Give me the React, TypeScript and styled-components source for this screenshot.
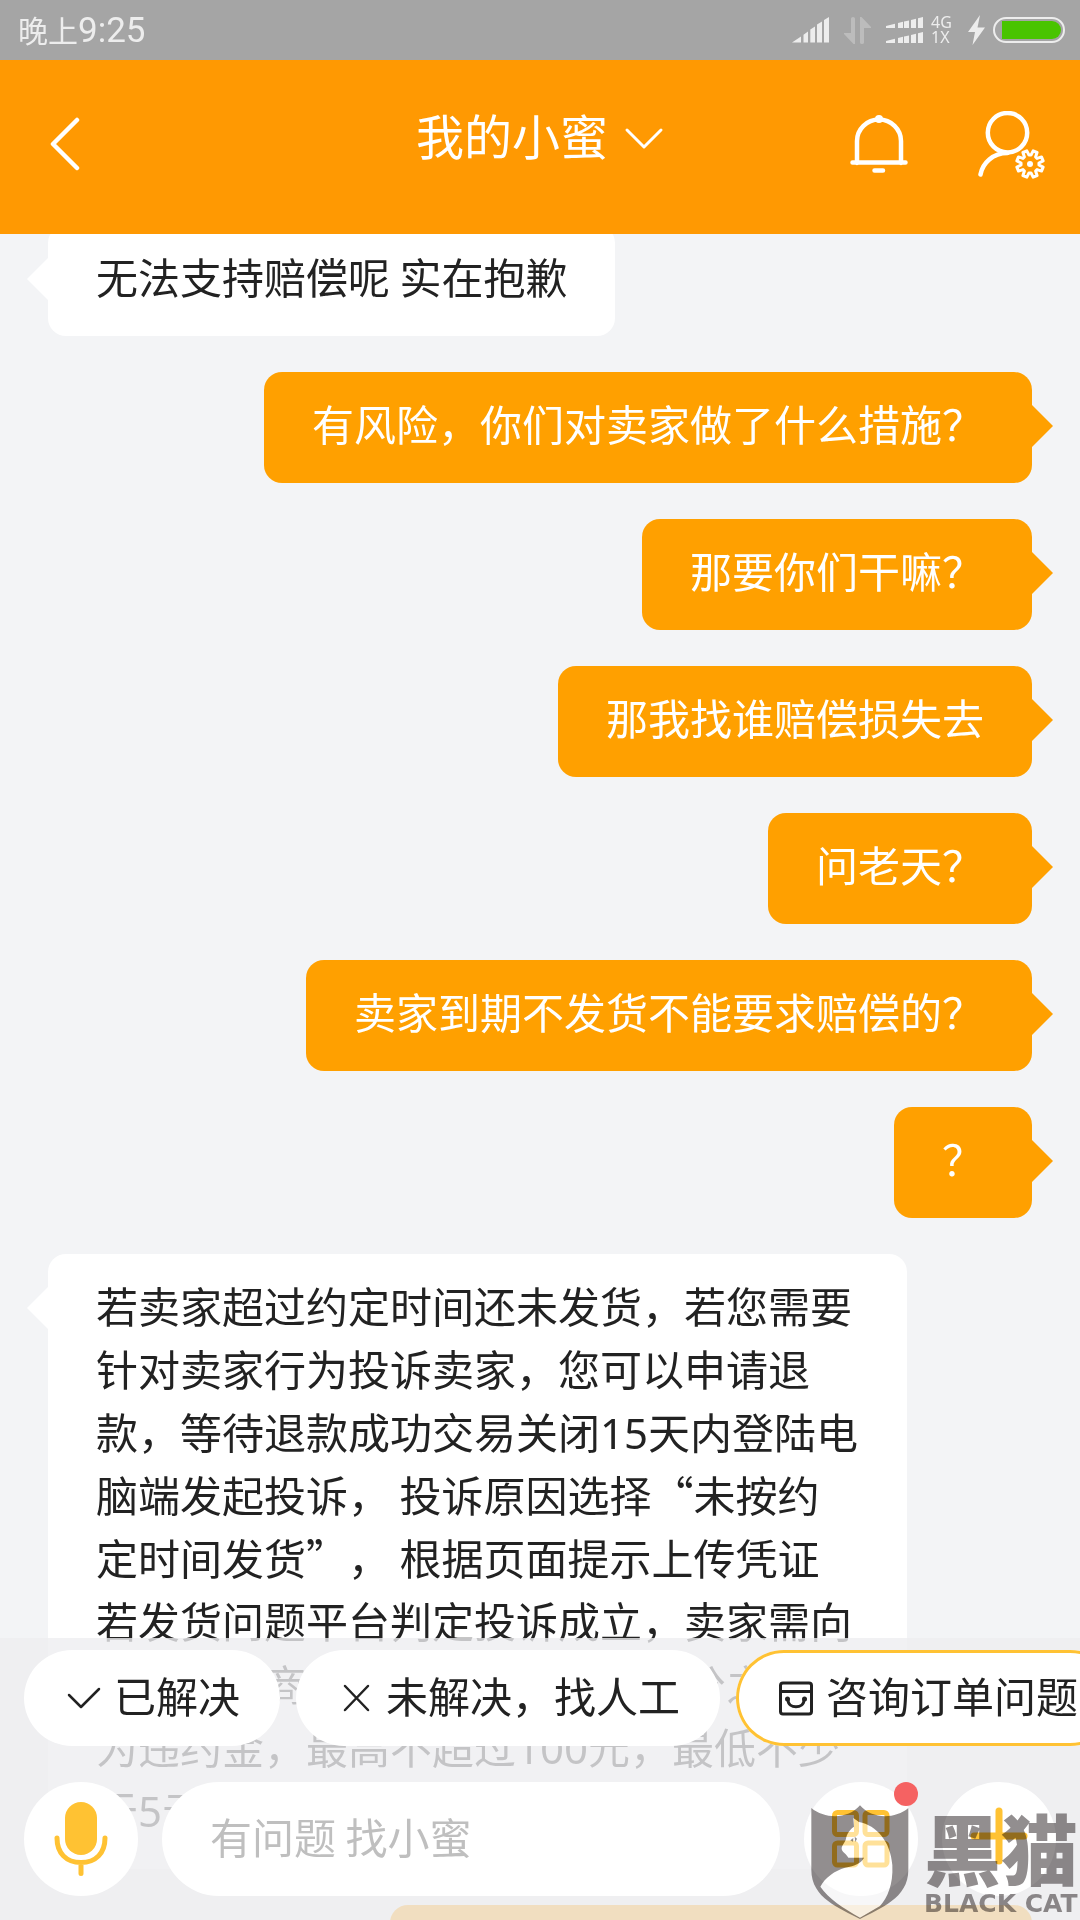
import React from "react";
import styled, { createGlobalStyle, css } from "styled-components";

const GlobalStyle = createGlobalStyle`
  *, *::before, *::after { box-sizing: border-box; }
  html, body { margin: 0; padding: 0; }
  body {
    background: #f3f4f6;
    color: #222;
    font-family: "Noto Sans CJK SC", "Noto Sans", sans-serif;
    font-size: 42px;
    line-height: 63px;
    text-spacing-trim: space-all;
  }
  button, input { font: inherit; color: inherit; margin: 0; }
  button { border: 0; padding: 0; background: none; cursor: pointer; }
  svg { display: block; flex: none; }
`;

const Screen = styled.div`
  position: relative;
  display: flex;
  flex-direction: column;
  height: 100vh;
  overflow: hidden;
`;

const StatusBar = styled.div`
  display: flex;
  align-items: center;
  flex: none;
  height: 60px;
  padding: 0 15px 0 18px;
  background: #a5a5a5;
  color: #ededed;
  font-size: 30px;
  line-height: 58px;
`;

const Clock = styled.time`
  margin-right: auto;
`;

const ClockDigits = styled.span`
  font-family: Roboto, sans-serif;
  font-size: 35px;
`;

const StatusIcons = styled.div`
  display: flex;
  align-items: center;
  gap: 15px;
`;

const StatusGroup = styled.div`
  display: flex;
  align-items: center;
  gap: 8px;
`;

const NetworkLabel = styled.span`
  width: 22px;
  font-family: "Noto Sans", sans-serif;
  font-size: 16px;
  line-height: 15px;
`;

const Header = styled.header`
  display: grid;
  grid-template-columns: 1fr auto 1fr;
  align-items: center;
  flex: none;
  height: 174px;
  padding: 0 34px;
  background: #ff9902;
  color: #fff;
`;

const HeaderButton = styled.button`
  display: flex;
`;

const BackButton = styled(HeaderButton)`
  padding-left: 14px;
`;

const HeaderActions = styled.div`
  display: flex;
  align-items: center;
  justify-content: flex-end;
  gap: 70px;
`;

const TitleButton = styled.button`
  display: flex;
  align-items: center;
  gap: 16px;
  padding-bottom: 16px;
`;

const Title = styled.span`
  padding-bottom: 10px;
  font-size: 48px;
  line-height: 72px;
`;

const Chat = styled.main`
  display: flex;
  flex-direction: column;
  gap: 36px;
  flex: 1;
  min-height: 0;
  padding: 0 48px;
  overflow: hidden;
`;

const Bubble = styled.p<{ $mine?: boolean; $first?: boolean }>`
  position: relative;
  flex: none;
  max-width: 859px;
  min-height: 111px;
  margin: ${(p) => (p.$first ? "-9px 0 0" : "0")};
  padding: 19px 48px 29px;
  border-radius: 18px;
  align-self: ${(p) => (p.$mine ? "flex-end" : "flex-start")};
  background: ${(p) => (p.$mine ? "#ffa000" : "#fff")};
  color: ${(p) => (p.$mine ? "#fff" : "#222")};
  white-space: pre-wrap;

  &::before {
    content: "";
    position: absolute;
    top: 33px;
    width: 21px;
    height: 42px;
    background: inherit;
    ${(p) =>
      p.$mine
        ? css`
            left: 100%;
            clip-path: polygon(0 0, 100% 50%, 0 100%);
          `
        : css`
            right: 100%;
            clip-path: polygon(100% 0, 0 50%, 100% 100%);
          `}
  }
`;

const Digits = styled.span`
  font-family: "Noto Sans", sans-serif;
  line-height: 1;
`;

const Composer = styled.footer`
  position: absolute;
  left: 0;
  right: 0;
  bottom: 0;
  display: flex;
  flex-direction: column;
  gap: 36px;
  padding: 12px 24px 24px;
  background: rgba(237, 238, 240, 0.8);
  overflow: hidden;
`;

const QuickReplies = styled.div`
  display: flex;
  gap: 16px;
`;

const QuickReply = styled.button<{ $outlined?: boolean }>`
  display: flex;
  align-items: center;
  flex: none;
  gap: 6px;
  height: 96px;
  padding: 0 40px 0 36px;
  border-radius: 48px;
  background: #fff;
  box-shadow: ${(p) => (p.$outlined ? "inset 0 0 0 3px #ffc233" : "none")};
  white-space: nowrap;
`;

const ReplyText = styled.span`
  padding-bottom: 8px;
`;

const InputRow = styled.form`
  display: flex;
  gap: 24px;
`;

const RoundButton = styled.button`
  position: relative;
  display: flex;
  align-items: center;
  justify-content: center;
  flex: none;
  width: 114px;
  height: 114px;
  border-radius: 50%;
  background: #fff;
`;

const Dot = styled.span`
  position: absolute;
  top: 0;
  right: 0;
  width: 24px;
  height: 24px;
  border-radius: 50%;
  background: #f56262;
`;

const Question = styled.input`
  flex: 1;
  min-width: 0;
  height: 114px;
  padding: 0 48px 8px;
  border: 0;
  border-radius: 57px;
  outline: 0;
  background: #fff;

  &::placeholder {
    color: #bfbfbf;
    opacity: 1;
  }
`;

const Watermark = styled.div`
  position: absolute;
  right: 0;
  bottom: 0;
  display: flex;
  gap: 14px;
  pointer-events: none;
`;

const Emblem = styled.div`
  display: grid;

  & > svg {
    grid-area: 1 / 1;
  }
`;

const ShieldShape = styled.svg`
  mix-blend-mode: multiply;
`;

const Brand = styled.div`
  display: flex;
  flex-direction: column;
  width: 156px;
  color: #928e8f;
  mix-blend-mode: multiply;
`;

const BrandName = styled.span`
  font-size: 77px;
  font-weight: 900;
  line-height: 86px;
`;

const BrandLatin = styled.span`
  font-family: "DejaVu Sans", sans-serif;
  font-size: 25px;
  font-weight: 700;
  line-height: 28px;
  white-space: nowrap;
`;

const BAR_XS = [0, 12, 18, 25, 32];

const SignalBars = () => (
  <svg width="37" height="26" viewBox="0 0 37 26" fill="#ededed" aria-hidden="true">
    <path d="M0 25.500L9 19.500V25.500ZM11.500 17.800L16 14.500V25.500H11.500ZM18.300 12.500L23 9.500V25.500H18.300ZM25 7.500L30 4.500V25.500H25ZM32 3L37 0V25.500H32Z" />
  </svg>
);

const DualSignal = () => (
  <svg width="37" height="28" viewBox="0 0 37 28" fill="#ededed" aria-hidden="true">
    {[0, 15].map((top) => (
      <g key={top} transform={`translate(0 ${top})`}>
        {BAR_XS.map((x, i) => {
          const end = i === 0 ? 9 : x + 5;
          const from = 10 - (x * 9) / 37;
          const to = 10 - (end * 9) / 37;
          return <path key={x} d={`M${x} ${from}L${end} ${to}V12H${x}Z`} />;
        })}
      </g>
    ))}
  </svg>
);

const DataArrows = () => (
  <svg width="27" height="27" viewBox="0 0 27 27" fill="#bcbcbc" aria-hidden="true">
    <path d="M7 1.500Q7 0 9 0T11 1.500V27H9.500L0 17V16H7ZM16 0H17.500L27 10V11H20V25.500Q20 27 18 27T16 25.500Z" />
  </svg>
);

const Bolt = () => (
  <svg width="17" height="30" viewBox="0 0 17 30" fill="#ededed" aria-hidden="true">
    <path d="M12 0L0 17H7L4.500 30L17 12.500H9.500Z" />
  </svg>
);

const Battery = () => (
  <svg width="72" height="26" viewBox="0 0 72 26" aria-hidden="true">
    <rect x="1" y="1" width="70" height="24" rx="12" fill="none" stroke="#ededed" strokeWidth="2" />
    <path d="M9 4H59A9 9 0 0 1 59 22H9Z" fill="#49c400" />
  </svg>
);

const line = {
  fill: "none",
  stroke: "currentColor",
  strokeLinecap: "round" as const,
  strokeLinejoin: "round" as const,
};

const BackIcon = () => (
  <svg width="32" height="60" viewBox="0 0 32 60" {...line} strokeWidth="4.500" aria-hidden="true">
    <path d="M29 3L5 27L29 51" />
  </svg>
);

const ChevronIcon = () => (
  <svg width="40" height="24" viewBox="0 0 40 24" {...line} strokeWidth="3" aria-hidden="true">
    <path d="M3 3L20 20L37 3" />
  </svg>
);

const BellIcon = () => (
  <svg width="58" height="64" viewBox="0 0 58 64" {...line} strokeWidth="4.500" aria-hidden="true">
    <path d="M7 48V26A22 21.500 0 0 1 51 26V48M2.500 47.500H55.500M24.500 55.500H33" />
    <circle cx="29" cy="4" r="4" fill="currentColor" stroke="none" />
  </svg>
);

const GEAR_POINTS = Array.from({ length: 8 }, (_, i) => {
  const tooth = ((i * 45 + 22.5) * Math.PI) / 180;
  return [
    [-16, 9],
    [-9, 13.5],
    [9, 13.5],
    [16, 9],
  ]
    .map(([offset, radius]) => {
      const angle = tooth + (offset * Math.PI) / 180;
      return `${52 + radius * Math.cos(angle)},${53 + radius * Math.sin(angle)}`;
    })
    .join(" ");
}).join(" ");

const PersonIcon = () => (
  <svg width="68" height="72" viewBox="0 0 68 72" {...line} strokeWidth="4.500" aria-hidden="true">
    <circle cx="29.500" cy="21.700" r="19.700" />
    <path d="M29.500 42C15 42 4.500 52 2.500 63.500" />
    <polygon points={GEAR_POINTS} strokeWidth="3" />
    <circle cx="52" cy="53" r="3" fill="currentColor" stroke="none" />
  </svg>
);

const CheckIcon = () => (
  <svg width="48" height="48" viewBox="0 0 48 48" {...line} strokeWidth="2.500" aria-hidden="true">
    <path d="M9 21L21 33L39 15" />
  </svg>
);

const CrossIcon = () => (
  <svg width="48" height="48" viewBox="0 0 48 48" {...line} strokeWidth="2.500" aria-hidden="true">
    <path d="M13 12L36 36M36 12L13 36" />
  </svg>
);

const OrderIcon = () => (
  <svg width="48" height="48" viewBox="0 0 48 48" {...line} strokeWidth="3" aria-hidden="true">
    <rect x="8.500" y="9" width="31" height="31" rx="2.500" />
    <path d="M9 17.500H39M16 26C16 35 32 35 32 26" />
    <circle cx="15.500" cy="25" r="2.500" fill="currentColor" stroke="none" />
    <circle cx="32.500" cy="25" r="2.500" fill="currentColor" stroke="none" />
  </svg>
);

const MicIcon = () => (
  <svg width="54" height="76" viewBox="0 0 54 76" fill="#ffc233" aria-hidden="true">
    <rect x="11" y="1" width="32" height="53" rx="16" />
    <path
      d="M3 37C3 52 12 61.500 27 61.500S51 52 51 37M27 62V72.500"
      fill="none"
      stroke="#ffc233"
      strokeWidth="5"
      strokeLinecap="round"
    />
  </svg>
);

const GridIcon = () => (
  <svg width="58" height="58" viewBox="0 0 58 58" fill="none" stroke="#ffc233" strokeWidth="5" aria-hidden="true">
    <rect x="2.500" y="2.500" width="22" height="22" rx="3" />
    <rect x="33" y="2.500" width="22" height="22" rx="3" />
    <rect x="2.500" y="33" width="22" height="22" rx="3" />
    <rect x="33" y="33" width="22" height="22" rx="3" />
  </svg>
);

const PlusIcon = () => (
  <svg width="58" height="64" viewBox="0 0 58 64" fill="none" stroke="#ffc233" strokeWidth="7" strokeLinecap="round" aria-hidden="true">
    <path d="M4 29H54M29 4V54" />
  </svg>
);

const CAT =
  "M190 144L207 156C260 166 302 215 307 285C310 345 292 383 270 408L210 443C160 415 115 385 91 350C105 322 135 302 165 293C195 288 215 278 222 263H175C170 252 155 245 155 236C155 226 166 216 168 206C170 192 180 178 192 170Z";

const CatEmblem = () => (
  <Emblem>
    <ShieldShape width="100" height="116" viewBox="60 102 300 348" aria-hidden="true">
      <path
        fill="#928e8f"
        fillRule="evenodd"
        d={`M64 114C105 148 175 148 210 106C245 148 315 148 355 114V300C355 385 270 415 210 447C150 415 64 385 64 300Z${CAT}`}
      />
      <path d="M181 211L190 204L189 215ZM194 200L201 206L196 216Z" fill="#928e8f" />
    </ShieldShape>
    <svg width="100" height="116" viewBox="60 102 300 348" aria-hidden="true">
      <path fill="#fff" fillOpacity="0.5" d={CAT} />
    </svg>
  </Emblem>
);

const QUESTIONS = [
  "有风险，你们对卖家做了什么措施？",
  "那要你们干嘛？",
  "那我找谁赔偿损失去",
  "问老天？",
  "卖家到期不发货不能要求赔偿的？",
  "？",
];

export default function App() {
  return (
    <Screen>
      <GlobalStyle />
      <StatusBar>
        <Clock>
          晚上<ClockDigits>9:25</ClockDigits>
        </Clock>
        <StatusIcons>
          <SignalBars />
          <DataArrows />
          <StatusGroup>
            <DualSignal />
            <NetworkLabel>
              4G
              <br />
              1X
            </NetworkLabel>
          </StatusGroup>
          <StatusGroup>
            <Bolt />
            <Battery />
          </StatusGroup>
        </StatusIcons>
      </StatusBar>

      <Header>
        <BackButton type="button" aria-label="返回">
          <BackIcon />
        </BackButton>
        <TitleButton type="button">
          <Title>我的小蜜</Title>
          <ChevronIcon />
        </TitleButton>
        <HeaderActions>
          <HeaderButton type="button" aria-label="通知">
            <BellIcon />
          </HeaderButton>
          <HeaderButton type="button" aria-label="账户设置">
            <PersonIcon />
          </HeaderButton>
        </HeaderActions>
      </Header>

      <Chat>
        <Bubble $first>无法支持赔偿呢 实在抱歉</Bubble>
        {QUESTIONS.map((text) => (
          <Bubble key={text} $mine>
            {text}
          </Bubble>
        ))}
        <Bubble>
          若卖家超过约定时间还未发货，若您需要针对卖家行为投诉卖家，您可以申请退款，等待退款成功交易关闭
          <Digits>15</Digits>天内登陆电脑端发起投诉， 投诉原因选择“未按约定时间发货”， 根据页面提示上传凭证
          <br />
          若发货问题平台判定投诉成立，卖家需向您支付该商品实际成交金额的百分之五作为违约金，最高不超过
          <Digits>100</Digits>元，最低不少于<Digits>5</Digits>元。
        </Bubble>
        <Bubble $mine>{"\u3000".repeat(13)}</Bubble>
      </Chat>

      <Composer>
        <QuickReplies>
          <QuickReply type="button">
            <CheckIcon />
            <ReplyText>已解决</ReplyText>
          </QuickReply>
          <QuickReply type="button">
            <CrossIcon />
            <ReplyText>未解决，找人工</ReplyText>
          </QuickReply>
          <QuickReply type="button" $outlined>
            <OrderIcon />
            <ReplyText>咨询订单问题</ReplyText>
          </QuickReply>
        </QuickReplies>
        <InputRow onSubmit={(e) => e.preventDefault()}>
          <RoundButton type="button" aria-label="语音输入">
            <MicIcon />
          </RoundButton>
          <Question type="text" aria-label="输入问题" placeholder="有问题 找小蜜" />
          <RoundButton type="button" aria-label="服务菜单">
            <GridIcon />
            <Dot />
          </RoundButton>
          <RoundButton type="button" aria-label="更多">
            <PlusIcon />
          </RoundButton>
        </InputRow>
      </Composer>

      <Watermark>
        <CatEmblem />
        <Brand>
          <BrandName>黑猫</BrandName>
          <BrandLatin>BLACK CAT</BrandLatin>
        </Brand>
      </Watermark>
    </Screen>
  );
}
